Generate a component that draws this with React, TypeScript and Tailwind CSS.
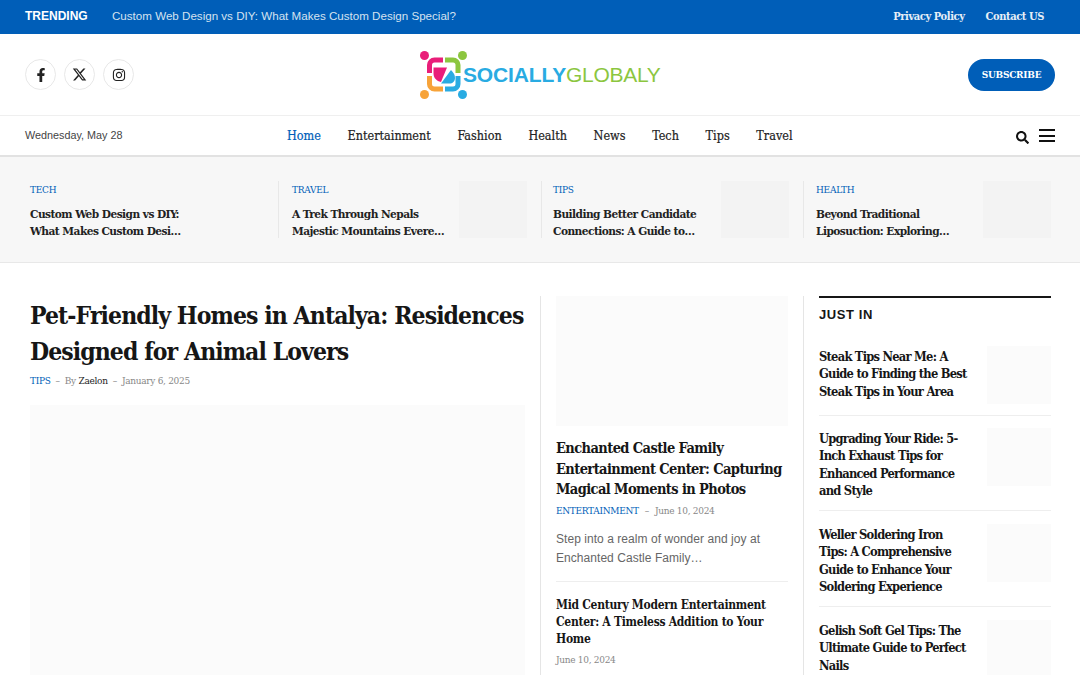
import React from "react";
import { FaFacebookF, FaInstagram, FaSearch } from "react-icons/fa";
import { FaXTwitter } from "react-icons/fa6";

const serif = "font-['DejaVu_Serif_Condensed','Liberation_Serif',serif]";
const sans = "font-['Liberation_Sans',sans-serif]";

function Logo() {
  return (
    <div className="flex items-center w-[240px] h-[50px]">
      <svg width="50" height="50" viewBox="0 0 50 50" className="shrink-0">
        <circle cx="4.5" cy="5.5" r="4.5" fill="#e91e79" />
        <circle cx="42.5" cy="5.5" r="4.5" fill="#8cc63f" />
        <circle cx="4.5" cy="44.5" r="4.5" fill="#f7a339" />
        <circle cx="42.5" cy="44.5" r="4.5" fill="#29abe2" />
        <path d="M9.500 23V15a5 5 0 0 1 5-5H23" fill="none" stroke="#e91e79" strokeWidth="5" />
        <path d="M25 10h8a5 5 0 0 1 5 5v8" fill="none" stroke="#8cc63f" strokeWidth="5" />
        <path d="M9.500 26v8a5 5 0 0 0 5 5H23" fill="none" stroke="#f7a339" strokeWidth="5" />
        <path d="M38 26v8a5 5 0 0 1-5 5h-8" fill="none" stroke="#29abe2" strokeWidth="5" />
        <path d="M13.500 17.500H27L21 32c-4.500-1-7.500-4-7.500-8.500z" fill="#e91e79" />
        <path d="M31 20c2.500 2.500 4 5 4 8 0 3.500-2.500 5.500-5.500 5.500H21z" fill="#29abe2" />
      </svg>
      <span className={`${sans} -ml-[7px] text-[21px] leading-none tracking-[-0.15px] font-bold text-[#29abe2]`}>SOCIALLY</span>
      <span className={`${sans} text-[21px] leading-none tracking-[-0.3px] text-[#8cc63f]`}>GLOBALY</span>
    </div>
  );
}

function Social({ children }: { children: React.ReactNode }) {
  return (
    <div className="w-[31px] h-[31px] rounded-full border border-[#e8e8e8] flex items-center justify-center text-[#222] text-[14px]">
      {children}
    </div>
  );
}

function Small({ cat, a, b, thumb, w }: { cat: string; a: string; b: string; thumb: boolean; w: string }) {
  return (
    <div className={`${w} flex h-[57px] justify-between`}>
      <div>
        <div className={`${serif} text-[10px] leading-[16px] pt-[1px] tracking-[-0.25px] text-[#005eb8] uppercase`}>{cat}</div>
        <div className={`${serif} mt-[8px] font-bold text-[11.8px] tracking-[-0.55px] leading-[17px] text-[#222] whitespace-nowrap`}>
          <div>{a}</div>
          <div>{b}</div>
        </div>
      </div>
      {thumb && <div className="w-[68px] h-[57px] shrink-0 bg-[#f3f3f3]" />}
    </div>
  );
}

function JustIn({ lines, h }: { lines: string[]; h: string }) {
  return (
    <div className={`flex justify-between border-b border-[#eee] ${h}`}>
      <div className={`${serif} font-bold text-[12.8px] tracking-[-0.76px] leading-[17.4px] text-[#161616] whitespace-nowrap pt-[2.5px]`}>
        {lines.map((l) => (
          <div key={l}>{l}</div>
        ))}
      </div>
      <div className="w-[64px] h-[58px] bg-[#fbfbfb]" />
    </div>
  );
}

export default function App() {
  return (
    <div className="w-[1080px] h-[675px] overflow-hidden bg-white relative">
      <div className="h-[34px] bg-[#005eb8] flex items-center justify-between pl-[25px] pr-[36px]">
        <div className="flex items-center">
          <span className={`${sans} font-bold text-[12px] text-white w-[87px] mb-[1px]`}>TRENDING</span>
          <span className={`${sans} text-[11.6px] mb-[3px] text-[#d5e2f0]`}>Custom Web Design vs DIY: What Makes Custom Design Special?</span>
        </div>
        <div className={`${serif} font-bold text-[11px] tracking-[-0.4px] text-[#e6eef7] flex gap-[21px]`}>
          <span>Privacy Policy</span>
          <span>Contact US</span>
        </div>
      </div>

      <div className="h-[81px] grid grid-cols-[1fr_auto_1fr] items-center pl-[25px] pr-[25px]">
        <div className="flex gap-[8px]">
          <Social><FaFacebookF /></Social>
          <Social><FaXTwitter className="text-[15px]" /></Social>
          <Social><FaInstagram /></Social>
        </div>
        <Logo />
        <div className="flex justify-end">
          <div className={`${serif} w-[87px] h-[32px] rounded-full bg-[#005eb8] text-white font-bold text-[10px] tracking-[-0.25px] flex items-center justify-center`}>SUBSCRIBE</div>
        </div>
      </div>

      <div className="h-[42px] border-t border-[#efefef] border-b-2 border-b-[#e2e2e2] flex items-center pl-[25px] pr-[25px]">
        <div className={`${sans} text-[10.8px] text-[#444] w-[262px]`}>Wednesday, May 28</div>
        <nav className={`${serif} text-[12.5px] text-[#222] [-webkit-text-stroke:0.2px] flex gap-[26.7px] pt-[1px]`}>
          <span className="text-[#005eb8]">Home</span>
          <span>Entertainment</span>
          <span>Fashion</span>
          <span>Health</span>
          <span>News</span>
          <span>Tech</span>
          <span>Tips</span>
          <span>Travel</span>
        </nav>
        <div className="ml-auto flex items-center gap-[10px] text-[#111]">
          <FaSearch className="text-[13px] mt-[3px]" />
          <div className="w-[16px] flex flex-col gap-[3.5px]">
            <div className="h-[2px] bg-[#111]" />
            <div className="h-[2px] bg-[#111]" />
            <div className="h-[2px] bg-[#111]" />
          </div>
        </div>
      </div>

      <div className="h-[106px] bg-[#f7f7f7] border-b border-[#e8e8e8] flex pl-[30px] pt-[24px]">
        <Small cat="Tech" a="Custom Web Design vs DIY:" b="What Makes Custom Desi…" thumb={false} w="w-[249px] border-r border-[#e8e8e8]" />
        <Small cat="Travel" a="A Trek Through Nepals" b="Majestic Mountains Evere…" thumb={true} w="w-[248px] pl-[13px] mr-[14px]" />
        <Small cat="Tips" a="Building Better Candidate" b="Connections: A Guide to…" thumb={true} w="w-[248px] border-l border-[#e8e8e8] pl-[11px] mr-[14px]" />
        <Small cat="Health" a="Beyond Traditional" b="Liposuction: Exploring…" thumb={true} w="w-[248px] border-l border-[#e8e8e8] pl-[12px]" />
      </div>

      <div className="flex pl-[30px] pt-[33px]">
        <div className="w-[511px] pr-[16px] border-r border-[#e5e5e5]">
          <h1 className={`${serif} font-bold text-[24.5px] tracking-[-0.92px] leading-[36px] text-[#161616] mt-[2px] whitespace-nowrap`}>
            Pet-Friendly Homes in Antalya: Residences
            <br />
            Designed for Animal Lovers
          </h1>
          <div className={`${serif} text-[10px] tracking-[-0.3px] mt-[3px] flex gap-[5px] text-[#888]`}>
            <span className="text-[#005eb8]">TIPS</span>
            <span>–</span>
            <span>By <span className="text-[#222]">Zaelon</span></span>
            <span>–</span>
            <span>January 6, 2025</span>
          </div>
          <div className="mt-[17px] w-[495px] h-[300px] bg-[#fbfbfb]" />
        </div>

        <div className="w-[263px] pl-[15px] pr-[15px] border-r border-[#e5e5e5]">
          <div className="w-[232px] h-[130px] bg-[#fbfbfb]" />
          <h2 className={`${serif} font-bold text-[14.5px] tracking-[-0.6px] leading-[20.5px] text-[#161616] mt-[12px] whitespace-nowrap`}>
            Enchanted Castle Family
            <br />
            Entertainment Center: Capturing
            <br />
            Magical Moments in Photos
          </h2>
          <div className={`${serif} text-[10px] tracking-[-0.3px] mt-[3px] flex gap-[6px] text-[#888]`}>
            <span className="text-[#005eb8]">ENTERTAINMENT</span>
            <span>–</span>
            <span>June 10, 2024</span>
          </div>
          <p className={`${sans} text-[12px] tracking-[0.05px] leading-[19px] text-[#666] mt-[12px]`}>
            Step into a realm of wonder and joy at
            <br />
            Enchanted Castle Family…
          </p>
          <div className="border-t border-[#eee] mt-[13px] pt-[15px]">
            <h3 className={`${serif} font-bold text-[12px] tracking-[-0.28px] leading-[17px] text-[#161616] whitespace-nowrap`}>
              Mid Century Modern Entertainment
              <br />
              Center: A Timeless Addition to Your
              <br />
              Home
            </h3>
            <div className={`${serif} text-[10px] tracking-[-0.3px] mt-[4px] text-[#888]`}>June 10, 2024</div>
          </div>
        </div>

        <div className="w-[232px] ml-[15px] border-t-2 border-[#161616]">
          <div className={`${sans} font-bold text-[13px] tracking-[0.6px] text-[#161616] pt-[7px] pb-[21px]`}>JUST IN</div>
          <div className="flex flex-col gap-[13px]">
            <JustIn h="h-[70px] -mb-[1px]" lines={["Steak Tips Near Me: A", "Guide to Finding the Best", "Steak Tips in Your Area"]} />
            <JustIn h="h-[83px]" lines={["Upgrading Your Ride: 5-", "Inch Exhaust Tips for", "Enhanced Performance", "and Style"]} />
            <JustIn h="h-[83px]" lines={["Weller Soldering Iron", "Tips: A Comprehensive", "Guide to Enhance Your", "Soldering Experience"]} />
            <JustIn h="h-[70px]" lines={["Gelish Soft Gel Tips: The", "Ultimate Guide to Perfect", "Nails"]} />
          </div>
        </div>
      </div>
    </div>
  );
}
